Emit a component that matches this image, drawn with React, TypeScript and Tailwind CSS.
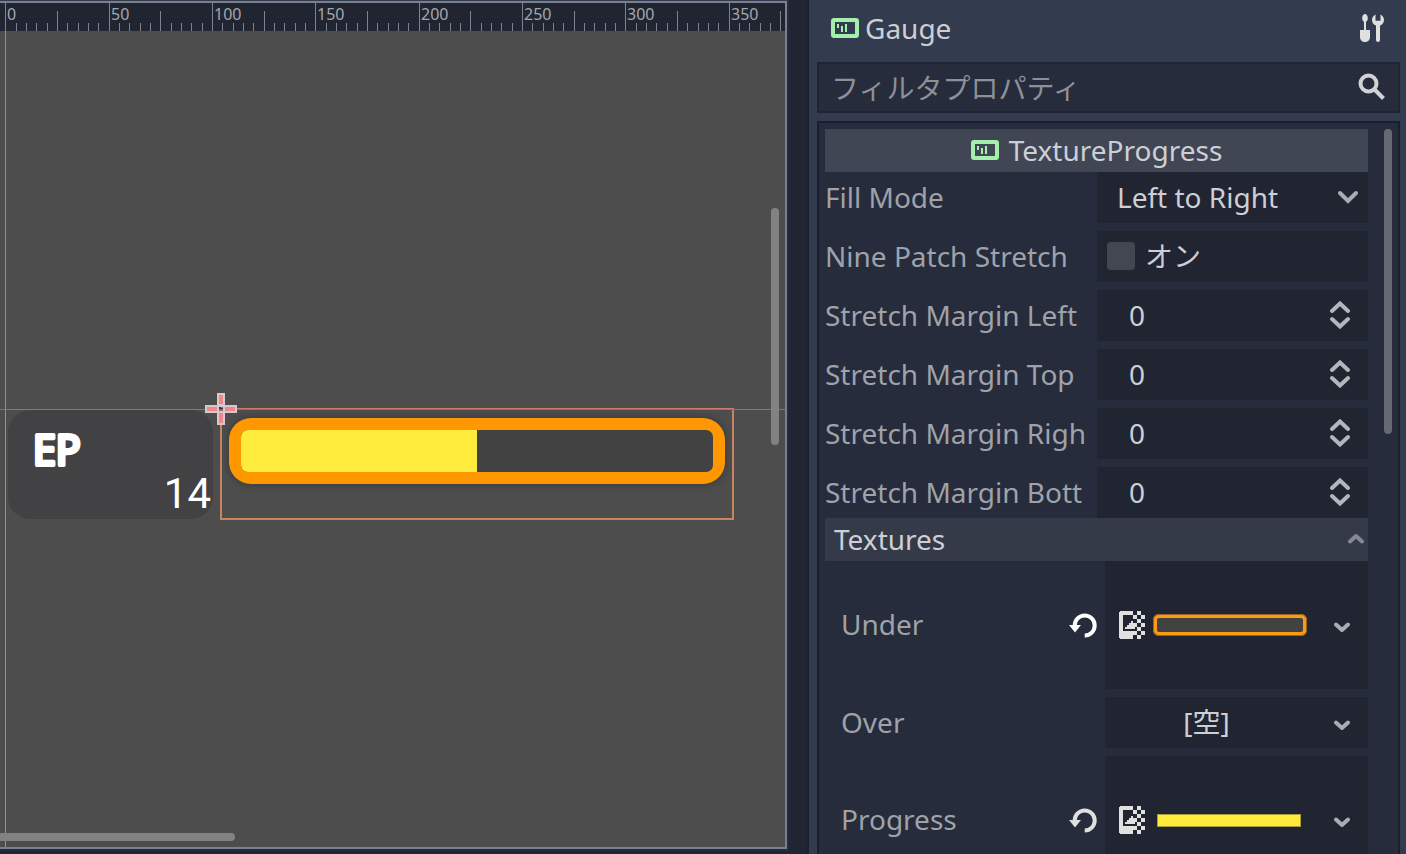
import React from "react";

const RULER_ORIGIN = 5.3;
const MAJOR_STEP = 103.35;
const RULER_LABELS = [0, 50, 100, 150, 200, 250, 300, 350];

function Ruler() {
  return (
    <svg className="block h-7 w-full shrink-0 bg-[#202531]" aria-label="Horizontal ruler">
      {RULER_LABELS.map((label, i) => {
        const x = RULER_ORIGIN + i * MAJOR_STEP;
        return (
          <g key={label} fill="#7f838c">
            <rect x={Math.round(x)} y={0} width={1} height={28} />
            {Array.from({ length: 9 }, (_, k) => k + 1).map((k) => (
              <rect
                key={k}
                x={Math.round(x + (k * MAJOR_STEP) / 10)}
                y={k === 5 ? 8 : 20}
                width={1}
                height={k === 5 ? 20 : 8}
              />
            ))}
            <text x={Math.round(x) + 2} y={17} fontSize={16} fill="#a4a7ae">
              {label}
            </text>
          </g>
        );
      })}
    </svg>
  );
}

function PositionCross() {
  return (
    <svg className="absolute left-[205px] top-[362px] h-8 w-8" viewBox="0 0 32 32">
      <path d="M12 0h8v12h12v8H20v12h-8V20H0v-8h12z" fill="#d9c8cb" />
      <path d="M14 2h4v9h-4zM14 20h4v10h-4zM2 14h10v4H2zM20 14h10v4H20z" fill="#f3868b" />
      <path d="M14 14h4v4h-4z" fill="#8d6a77" />
      <path d="M14 14h2v2h-2zM16 15h2v1h-2z" fill="#3c3338" />
    </svg>
  );
}

function Viewport() {
  return (
    <main className="flex min-w-0 flex-1 flex-col bg-[#202531] pr-[18px]">
      <div className="mb-[3px] flex min-h-0 flex-1 flex-col border-b-2 border-r-2 border-[#262c3f] border-t border-t-[#333b4f]">
        <div className="flex min-h-0 flex-1 flex-col border-y-2 border-r-2 border-[#7a808e]">
          <Ruler />
          <div className="relative min-h-0 flex-1 overflow-hidden bg-[#4d4d4d]">
            <div className="absolute left-2 top-[379px] h-[109px] w-[205px] rounded-[22px] bg-[#424244]" />
            <svg className="absolute left-2 top-[379px] h-[109px] w-[212px]" viewBox="0 0 212 109">
              <text
                x="25"
                y="55"
                fontSize="41"
                fontFamily="Noto Sans, sans-serif"
                fill="#ffffff"
                stroke="#ffffff"
                strokeWidth="4"
                strokeLinejoin="round"
              >
                EP
              </text>
              <text
                x="203"
                y="98"
                fontSize="42"
                textAnchor="end"
                fontFamily="Roboto, sans-serif"
                fill="#ffffff"
              >
                14
              </text>
            </svg>

            <div className="absolute left-[229px] top-[387px] flex h-[66px] w-[496px] rounded-[22px] bg-[#ff9800] p-3 shadow-[0_0_5px_3px_#424244]">
              <div className="flex-1 overflow-hidden rounded-[7px] bg-[#424242]">
                <div className="h-full w-1/2 bg-[#ffeb3b]" />
              </div>
            </div>

            <div className="absolute left-[220px] top-[377px] h-28 w-[514px] border-2 border-[#c9835f] border-t-[#d07a70]" />
            <div className="absolute left-0 top-[378px] h-px w-full bg-[#a05fa8]" />
            <div className="absolute left-0 top-[378px] h-px w-[5px] bg-[#a06a50]" />
            <div className="absolute left-[5px] top-0 h-[378px] w-px bg-[#55b85c]" />
            <div className="absolute bottom-0 left-[5px] top-[379px] w-px bg-[#5fa8ac]" />
            <PositionCross />

            <div className="absolute right-[6px] top-[177px] h-[237px] w-2 rounded-full bg-[#828282]" />
            <div className="absolute -left-2 bottom-[6px] h-2 w-[243px] rounded-full bg-[#828282]" />
          </div>
        </div>
      </div>
    </main>
  );
}

function TextureProgressIcon() {
  return (
    <svg className="h-5 w-7 shrink-0" viewBox="0 0 28 20" fill="#a5efac">
      <path
        fillRule="evenodd"
        d="M3 0h22a3 3 0 0 1 3 3v14a3 3 0 0 1-3 3H3a3 3 0 0 1-3-3V3a3 3 0 0 1 3-3zM4 4v12h20V4z"
      />
      <path d="M6 6h2v4H6zM10 8h2v6h-2zM14 6h2v8h-2z" />
    </svg>
  );
}

function ToolsIcon() {
  return (
    <svg className="h-7 w-6" viewBox="0 0 24 28" fill="#e0e0e0">
      <path d="M5 0C3.500 0 2.200 2 2.200 4.200c0 1.700.8 2.800 1.800 3.500V16H0v7c0 3 2.200 5 5 5s5-2 5-5v-7H6V7.700c1-.7 1.800-1.800 1.800-3.500C7.800 2 6.500 0 5 0z" />
      <path d="M15.500.5v6.300h5V.5C22.600 1.400 24 3.600 24 6c0 2.600-1.600 4.700-4 5.600V26a2 2 0 0 1-4 0V11.600c-2.400-.9-4-3-4-5.600 0-2.400 1.400-4.600 3.500-5.500z" />
    </svg>
  );
}

function SearchIcon() {
  return (
    <svg className="mb-0.5 h-7 w-7 shrink-0" viewBox="0 0 28 28" fill="none" stroke="#d0d2d6">
      <circle cx="10.500" cy="10.500" r="8" strokeWidth="4" />
      <path d="M16 16l9.500 9.500" strokeWidth="4" />
    </svg>
  );
}

function Chevron({ up = false, color = "#a9acb3" }: { up?: boolean; color?: string }) {
  return (
    <svg className="h-3 w-4 shrink-0" viewBox="0 0 16 12" fill="none" stroke={color} strokeWidth="4" strokeLinecap="round" strokeLinejoin="round">
      <path d={up ? "M2 8.500l6-5.500 6 5.500" : "M2 3.500l6 5.500 6-5.500"} />
    </svg>
  );
}

function UpDownIcon() {
  return (
    <svg className="h-7 w-5" viewBox="0 0 20 28" fill="none" stroke="#b3b6bb" strokeWidth="4" strokeLinecap="round">
      <path d="M2 10l8-7.500L18 10M2 18l8 7.500L18 18" />
    </svg>
  );
}

function ResetIcon({ color }: { color: string }) {
  return (
    <svg className="h-[25px] w-7" viewBox="0 0 28 25">
      <path d="M15.700 22.500a10 10 0 1 0-10-10" fill="none" stroke={color} strokeWidth="4" />
      <path d="M0 12h12l-6 7.500z" fill={color} />
    </svg>
  );
}

function ImageTextureIcon() {
  return (
    <svg className="h-7 w-[26px] shrink-0" viewBox="0 0 13 14" fill="#e0e0e0" shapeRendering="crispEdges">
      <path d="M.5 0H7v2H2v8h5v4H.5L0 13.500V.5z" />
      <path d="M3 9V8h1V7h1V6h1V5h1v2h1v2z" />
      <path d="M9 0h2v2H9zM7 2h2v2H7zM11 2h2v2h-2zM9 4h2v2H9zM7 6h2v2H7zM11 6h2v2h-2zM9 8h2v2H9zM7 10h2v2H7zM11 10h2v2h-2zM9 12h2v2H9z" />
    </svg>
  );
}

function Row({ id, label, children }: { id: string; label: string; children: React.ReactNode }) {
  return (
    <div className="flex h-[51px]">
      <label htmlFor={id} className="flex w-[272px] shrink-0 items-center overflow-hidden whitespace-nowrap pb-0.5 text-[#9fa2a9]">
        {label}
      </label>
      <div className="relative flex min-w-0 flex-1 items-center bg-[#202531] pb-0.5">{children}</div>
    </div>
  );
}

function NumberRow({ id, label }: { id: string; label: string }) {
  return (
    <Row id={id} label={label}>
      <input id={id} type="text" inputMode="numeric" defaultValue="0" className="h-full w-full bg-transparent pl-8 pr-12 outline-none" />
      <span className="pointer-events-none absolute right-[18px] top-[11px]">
        <UpDownIcon />
      </span>
    </Row>
  );
}

function TextureRow({
  label,
  resetColor,
  tall = false,
  children,
}: {
  label: string;
  resetColor?: string;
  tall?: boolean;
  children: React.ReactNode;
}) {
  return (
    <div className={tall ? "flex h-32 shrink-0" : "flex h-[51px] shrink-0"}>
      <div className="flex w-[280px] shrink-0 items-center justify-between pl-4 pr-2 text-[#9fa2a9]">
        <span className="pb-0.5">{label}</span>
        {resetColor && (
          <button type="button" aria-label={`Reset ${label}`}>
            <ResetIcon color={resetColor} />
          </button>
        )}
      </div>
      <button type="button" aria-label={label} className="flex min-w-0 flex-1 items-center bg-[#202531] pl-[14px] pr-[18px]">
        {children}
        <span className="pt-1">
          <Chevron />
        </span>
      </button>
    </div>
  );
}

function Inspector() {
  return (
    <aside className="flex w-[599px] shrink-0 flex-col border-l-2 border-[#1c2130] bg-[#333b4f] pl-2 pr-[6px]">
      <header className="flex h-[62px] items-center pb-[6px] pl-[14px] pr-4">
        <TextureProgressIcon />
        <h1 className="ml-[6px] flex-1">Gauge</h1>
        <button type="button" aria-label="Object tools">
          <ToolsIcon />
        </button>
      </header>

      <div className="flex h-[51px] shrink-0 items-center border-2 border-[#1f2533] bg-[#262c3b] pl-3 pr-3">
        <input
          type="text"
          aria-label="フィルタプロパティ"
          placeholder="フィルタプロパティ"
          className="h-full min-w-0 flex-1 bg-transparent outline-none placeholder:text-[#8d9098]"
        />
        <SearchIcon />
      </div>

      <section className="mt-2 flex min-h-0 flex-1 overflow-hidden border-2 border-b-0 border-[#1a1f2e] bg-[#262c3b] px-[6px] pt-[6px]">
        <div className="min-w-0 flex-1">
          <h2 className="flex h-[43px] items-center justify-center gap-[10px] bg-[#414654] pb-0.5">
            <TextureProgressIcon />
            TextureProgress
          </h2>

          <div className="flex flex-col gap-2">
            <Row id="fill-mode" label="Fill Mode">
              <select id="fill-mode" className="h-full w-full appearance-none bg-transparent pl-5 pr-12 outline-none">
                <option>Left to Right</option>
              </select>
              <svg className="pointer-events-none absolute right-[10px] top-[17px] h-4 w-5" viewBox="0 0 20 16" fill="none" stroke="#a9acb3" strokeWidth="4" strokeLinecap="round">
                <path d="M2 4l8 8 8-8" />
              </svg>
            </Row>
            <Row id="nine-patch" label="Nine Patch Stretch">
              <input
                id="nine-patch"
                type="checkbox"
                className="ml-[10px] h-7 w-7 shrink-0 appearance-none rounded bg-[#434751] checked:bg-[#699ce8]"
              />
              <span className="ml-[10px]">オン</span>
            </Row>
            <NumberRow id="margin-left" label="Stretch Margin Left" />
            <NumberRow id="margin-top" label="Stretch Margin Top" />
            <NumberRow id="margin-right" label="Stretch Margin Righ" />
            <NumberRow id="margin-bottom" label="Stretch Margin Bott" />
          </div>

          <button type="button" className="flex h-[43px] w-full items-center justify-between bg-[#353a48] pb-0.5 pl-[9px] pr-1">
            Textures
            <Chevron up color="#858992" />
          </button>

          <div className="flex flex-col gap-2">
            <TextureRow label="Under" resetColor="#ffffff" tall>
              <ImageTextureIcon />
              <span className="ml-2 mr-auto flex w-[154px]">
                <span className="h-[22px] w-full rounded-[6px] border-4 border-[#fb9a14] bg-[#424242] outline outline-1 -outline-offset-1 outline-[#9a6420]" />
              </span>
            </TextureRow>
            <TextureRow label="Over">
              <span className="flex-1 pb-0.5 pr-10">[空]</span>
            </TextureRow>
            <TextureRow label="Progress" resetColor="#e0e0e0" tall>
              <ImageTextureIcon />
              <span className="ml-3 mr-auto h-[13px] w-[144px] border border-[#a89d35] bg-[#ffeb3b]" />
            </TextureRow>
          </div>
        </div>
        <div className="ml-4 h-[305px] w-2 shrink-0 rounded-full bg-[#646974]" />
      </section>
    </aside>
  );
}

export default function App() {
  return (
    <div className="flex h-screen overflow-hidden bg-[#202531] font-['Noto_Sans','Noto_Sans_CJK_JP',sans-serif] text-[28px] leading-9 text-[#cdcfd5]">
      <Viewport />
      <Inspector />
    </div>
  );
}
